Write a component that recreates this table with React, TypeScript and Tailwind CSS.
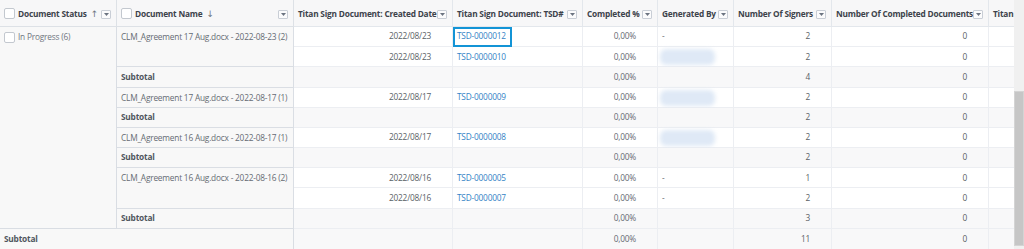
import React from "react";

type Row = {
  kind: "data" | "sub";
  name?: string;
  span?: number;
  date?: string;
  tsd?: string;
  focus?: boolean;
  gen?: "-" | "blur" | "";
  signers: number;
};

const rows: Row[] = [
  { kind: "data", name: "CLM_Agreement 17 Aug.docx - 2022-08-23 (2)", span: 2, date: "2022/08/23", tsd: "TSD-0000012", focus: true, gen: "-", signers: 2 },
  { kind: "data", date: "2022/08/23", tsd: "TSD-0000010", gen: "blur", signers: 2 },
  { kind: "sub", signers: 4 },
  { kind: "data", name: "CLM_Agreement 17 Aug.docx - 2022-08-17 (1)", span: 1, date: "2022/08/17", tsd: "TSD-0000009", gen: "blur", signers: 2 },
  { kind: "sub", signers: 2 },
  { kind: "data", name: "CLM_Agreement 16 Aug.docx - 2022-08-17 (1)", span: 1, date: "2022/08/17", tsd: "TSD-0000008", gen: "blur", signers: 2 },
  { kind: "sub", signers: 2 },
  { kind: "data", name: "CLM_Agreement 16 Aug.docx - 2022-08-16 (2)", span: 2, date: "2022/08/16", tsd: "TSD-0000005", gen: "-", signers: 1 },
  { kind: "data", date: "2022/08/16", tsd: "TSD-0000007", gen: "-", signers: 2 },
  { kind: "sub", signers: 3 },
];

const FilterBtn = () => (
  <span className="ml-auto mr-[5px] flex h-[9px] w-[10px] shrink-0 items-center justify-center rounded-[1px] border border-[#c9ced6] bg-[#fbfbfc]">
    <svg width="5" height="3" viewBox="0 0 5 3">
      <path d="M0 0h5L2.5 3z" fill="#6b7380" />
    </svg>
  </span>
);

const Checkbox = () => (
  <span className="inline-block h-[11px] w-[11px] shrink-0 rounded-[2px] border border-[#c3c8cf] bg-white" />
);

const Head = ({ label, sort, first, last }: { label: string; sort?: string; first?: boolean; last?: boolean }) => (
  <div
    className={`flex items-center overflow-hidden whitespace-nowrap border-b border-[#dde1e6] bg-[#f7f7f8] pt-[3px] pl-[4px] font-bold text-[#3d434b] ${
      last ? "" : "border-r"
    } ${first ? "border-[#d6dae0]" : "border-[#e3e7ec]"}`}
  >
    {first && (
      <span className="mr-[3px]">
        <Checkbox />
      </span>
    )}
    <span>{label}</span>
    {sort && (
      <span className="ml-[4px] font-['DejaVu_Sans',sans-serif] text-[9px] font-normal text-[#6f7782]">{sort}</span>
    )}
    {!last && <FilterBtn />}
  </div>
);

const cellR = "flex items-center justify-end border-b border-r border-[#eceef2] pr-[21px]";
const cellL = "flex items-center border-b border-r border-[#eceef2] pl-[4px]";

export default function App() {
  return (
    <div className="flex h-[249px] w-[1024px] overflow-hidden bg-white font-['Open_Sans',sans-serif] text-[8.3px] leading-none tracking-[-0.2px] text-[#666b73]">
      <div className="grid grid-cols-[117px_177px_159px_130px_75px_76px_98px_157px_25px] grid-rows-[27px_repeat(11,20.18px)]">
        <Head label="Document Status" sort="↑" first />
        <Head label="Document Name" sort="↓" first />
        <Head label="Titan Sign Document: Created Date" />
        <Head label="Titan Sign Document: TSD#" />
        <Head label="Completed %" />
        <Head label="Generated By" />
        <Head label="Number Of Signers" />
        <Head label="Number Of Completed Documents" />
        <Head label="Titan" last />

        <div className="row-span-10 flex items-start gap-[3px] border-b border-r border-[#d9dde3] bg-[#f8f8f8] pl-[4px] pt-[5px]">
          <Checkbox />
          <span className="pt-[1px] text-[#707680]">In Progress (6)</span>
        </div>

        {rows.map((r, i) => {
          const sub = r.kind === "sub";
          const bg = sub ? "bg-[#f8f8f9]" : "bg-white";
          return (
            <React.Fragment key={i}>
              {sub ? (
                <div className="flex items-center border-b border-r border-[#dadee4] bg-[#f8f8f8] pl-[4px] font-bold text-[#50565e]">
                  Subtotal
                </div>
              ) : (
                r.name && (
                  <div
                    className={`flex items-start whitespace-nowrap border-b border-r border-[#dadee4] bg-[#f8f8f8] pl-[4px] pt-[6px] ${
                      r.span === 2 ? "row-span-2" : ""
                    }`}
                  >
                    {r.name}
                  </div>
                )
              )}
              <div className={`${cellR} ${bg} text-[#5a5f66]`}>{r.date}</div>
              <div className={`${cellL} ${bg}`}>
                {r.tsd && (
                  <span
                    className={
                      r.focus
                        ? "-ml-[4px] flex h-[20px] w-[59px] items-center border-2 border-[#1394d6] pl-[2px] text-[#3583c6]"
                        : "text-[#3583c6]"
                    }
                  >
                    {r.tsd}
                  </span>
                )}
              </div>
              <div className={`${cellR} ${bg}`}>0,00%</div>
              <div className={`${cellL} ${bg} relative`}>
                {r.gen === "-" && <span>-</span>}
                {r.gen === "blur" && (
                  <span className="absolute left-[2px] top-[2px] h-[16px] w-[55px] rounded-[6px] bg-[#dfe9f6] blur-[2px]" />
                )}
              </div>
              <div className={`${cellR} ${bg} text-[#5a5f66]`}>{r.signers}</div>
              <div className={`${cellR} ${bg} text-[#5a5f66]`}>0</div>
              <div className={`border-b border-[#eceef2] ${bg}`} />
            </React.Fragment>
          );
        })}

        <div className="col-span-2 flex items-center border-r border-[#d9dde3] bg-[#f8f8f8] pl-[4px] font-bold text-[#50565e]">
          Subtotal
        </div>
        <div className="border-r border-[#eceef2] bg-[#f8f8f9]" />
        <div className="border-r border-[#eceef2] bg-[#f8f8f9]" />
        <div className="flex items-center justify-end border-r border-[#eceef2] bg-[#f8f8f9] pr-[21px]">0,00%</div>
        <div className="border-r border-[#eceef2] bg-[#f8f8f9]" />
        <div className="flex items-center justify-end border-r border-[#eceef2] bg-[#f8f8f9] pr-[21px] text-[#5a5f66]">11</div>
        <div className="flex items-center justify-end border-r border-[#eceef2] bg-[#f8f8f9] pr-[21px] text-[#5a5f66]">0</div>
        <div className="bg-[#f8f8f9]" />
      </div>

      <div className="flex w-[10px] flex-col bg-[#f0f0f0]">
        <div className="h-[91px]" />
        <div className="h-[155px] border border-[#d4d4d4] bg-[#c6c6c6]" />
      </div>
    </div>
  );
}
